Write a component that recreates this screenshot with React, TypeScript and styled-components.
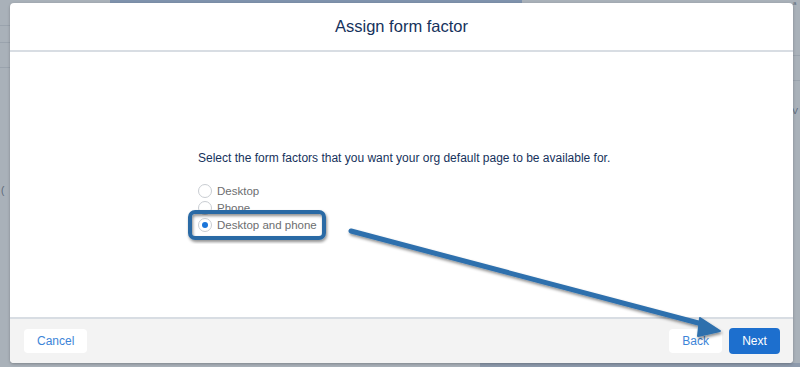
import React from "react";
import styled, { createGlobalStyle } from "styled-components";

const Global = createGlobalStyle`
  html, body { margin: 0; padding: 0; }
  body { font-family: "Liberation Sans", Arial, sans-serif; }
  #root { width: 800px; height: 367px; }
`;

const Page = styled.div`
  position: relative;
  width: 800px;
  height: 367px;
  overflow: hidden;
  background: #a9b1b9;
  padding: 3px 7px 4px 10px;
  box-sizing: border-box;
`;

const BgBand = styled.div`
  position: absolute;
  top: 0;
  left: 110px;
  width: 412px;
  height: 3px;
  background: #7f93ad;
`;

const BgBottom = styled.div`
  position: absolute;
  bottom: 0;
  left: 480px;
  right: 0;
  height: 4px;
  background: #8d9aac;
`;

const BgLine = styled.div<{ $top: number; $left: number; $width: number }>`
  position: absolute;
  top: ${(p) => p.$top}px;
  left: ${(p) => p.$left}px;
  width: ${(p) => p.$width}px;
  height: 1px;
  background: #9aa3ad;
`;

const BgText = styled.span<{ $top: number; $left: number; $size?: number }>`
  position: absolute;
  top: ${(p) => p.$top}px;
  left: ${(p) => p.$left}px;
  font-size: ${(p) => p.$size ?? 12}px;
  color: #5a6878;
  line-height: 1;
`;

const Modal = styled.div`
  position: relative;
  height: 100%;
  display: flex;
  flex-direction: column;
  background: #fff;
  border-radius: 4px;
  overflow: hidden;
  box-shadow: 0 1px 3px rgba(0, 0, 0, 0.25);
`;

const Header = styled.header`
  height: 47px;
  flex: none;
  display: flex;
  align-items: center;
  justify-content: center;
  border-bottom: 2px solid #d8dde3;
`;

const Title = styled.h2`
  margin: 0;
  font-size: 16.5px;
  font-weight: 400;
  color: #16325c;
`;

const Body = styled.main`
  flex: 1;
  padding: 98px 0 0 188px;
  box-sizing: border-box;
`;

const Prompt = styled.p`
  margin: 0 0 16px;
  font-size: 12px;
  line-height: 16px;
  color: #16325c;
`;

const RadioList = styled.div`
  display: flex;
  flex-direction: column;
`;

const RadioRow = styled.label`
  display: flex;
  align-items: center;
  height: 17px;
  gap: 5px;
  font-size: 11.5px;
  color: #6d6e70;
`;

const Circle = styled.span<{ $checked?: boolean }>`
  width: 12px;
  height: 12px;
  border: 1px solid #c9cdd2;
  border-radius: 50%;
  background: #fff;
  display: flex;
  align-items: center;
  justify-content: center;
  &::after {
    content: "";
    display: ${(p) => (p.$checked ? "block" : "none")};
    width: 6px;
    height: 6px;
    border-radius: 50%;
    background: #1b75d9;
  }
`;

const Footer = styled.footer`
  height: 44px;
  flex: none;
  display: flex;
  align-items: center;
  padding: 0 13px 0 14px;
  background: #f3f3f3;
  border-top: 2px solid #d8dde3;
`;

const Button = styled.button<{ $brand?: boolean }>`
  height: ${(p) => (p.$brand ? 26 : 24)}px;
  min-width: ${(p) => (p.$brand ? 51 : 51)}px;
  padding: 0 13px;
  border: none;
  border-radius: 4px;
  font-family: inherit;
  font-size: 12px;
  background: ${(p) => (p.$brand ? "#1d6fce" : "#fff")};
  color: ${(p) => (p.$brand ? "#fff" : "#3d85d8")};
`;

const Spacer = styled.div`
  flex: 1;
`;

const ButtonGroup = styled.div`
  display: flex;
  gap: 7px;
  align-items: center;
`;

const Annotation = styled.svg`
  position: absolute;
  left: 0;
  top: 0;
  pointer-events: none;
`;

export default function App() {
  return (
    <>
      <Global />
      <Page>
        <BgBand />
        <BgBottom />
        <BgLine $top={25} $left={0} $width={10} />
        <BgLine $top={42} $left={0} $width={10} />
        <BgLine $top={67} $left={0} $width={10} />
        <BgLine $top={55} $left={793} $width={7} />
        <BgLine $top={80} $left={793} $width={7} />
        <BgText $top={186} $left={1} $size={10}>(</BgText>
        <BgText $top={107} $left={792} $size={9}>V</BgText>
        <BgText $top={0} $left={793} $size={6}>a</BgText>
        <Modal>
          <Header>
            <Title>Assign form factor</Title>
          </Header>
          <Body>
            <Prompt>
              Select the form factors that you want your org default page to be available for.
            </Prompt>
            <RadioList>
              <RadioRow>
                <Circle />
                Desktop
              </RadioRow>
              <RadioRow>
                <Circle />
                Phone
              </RadioRow>
              <RadioRow>
                <Circle $checked />
                Desktop and phone
              </RadioRow>
            </RadioList>
          </Body>
          <Footer>
            <Button>Cancel</Button>
            <Spacer />
            <ButtonGroup>
              <Button>Back</Button>
              <Button $brand>Next</Button>
            </ButtonGroup>
          </Footer>
        </Modal>
        <Annotation width="800" height="367" viewBox="0 0 800 367">
          <defs>
            <filter id="sh" x="-20%" y="-20%" width="140%" height="140%">
              <feDropShadow dx="1" dy="2" stdDeviation="1.5" floodColor="#000" floodOpacity="0.45" />
            </filter>
          </defs>
          <rect x="190" y="212" width="134" height="26" rx="5" fill="none" stroke="#2c6ba5" strokeWidth="4" filter="url(#sh)" />
          <g filter="url(#sh)">
            <line x1="351" y1="231" x2="706" y2="325" stroke="#2e70ad" strokeWidth="5" strokeLinecap="round" />
            <polygon points="700,318 720,331 698,336" fill="#2e70ad" stroke="#2e70ad" strokeWidth="2" strokeLinejoin="round" />
          </g>
        </Annotation>
      </Page>
    </>
  );
}
